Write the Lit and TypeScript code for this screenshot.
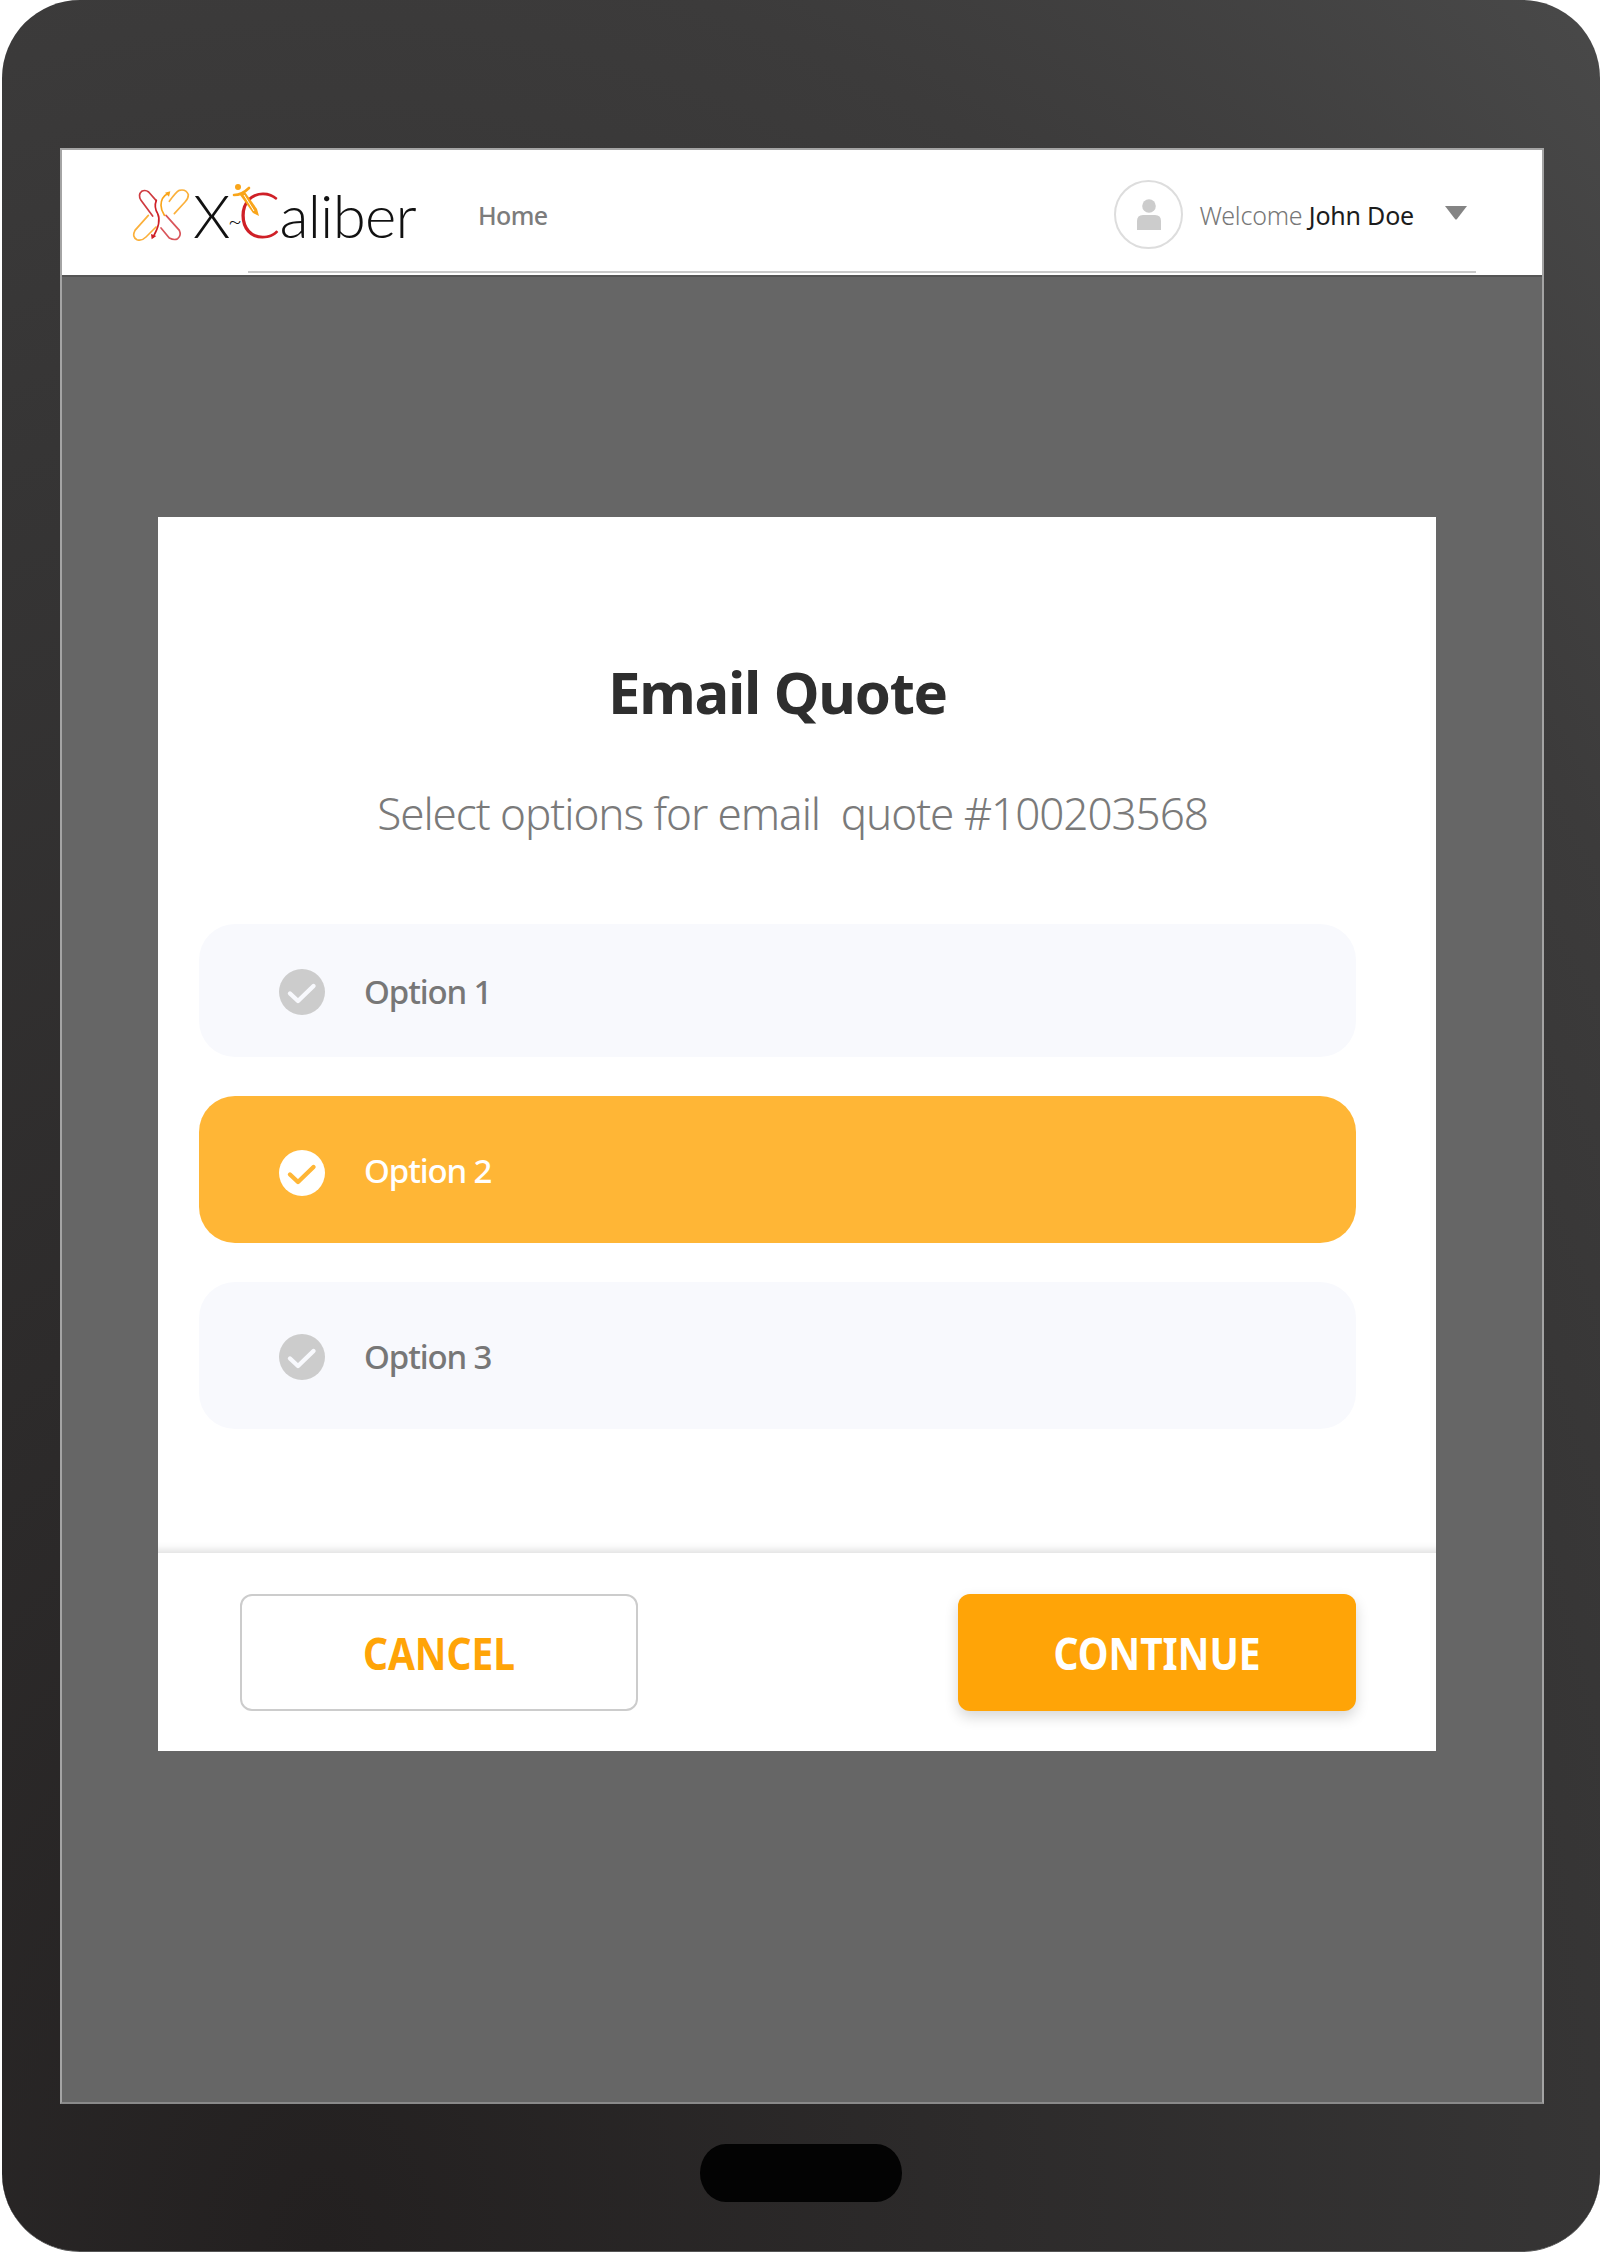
import { LitElement, html, css, svg } from 'lit';
import { customElement, state } from 'lit/decorators.js';

const options = ['Option 1', 'Option 2', 'Option 3'];

const checkIcon = svg`<path d="M11 24.5l8 7.5L34.5 17" fill="none" stroke-width="4.4" stroke-linecap="round" stroke-linejoin="round"/>`;

@customElement('app-root')
export class AppRoot extends LitElement {
    @state() selected = 1;

    static styles = css`
    :host {
      display: block;
      width: 1600px;
      height: 2254px;
      background: #fff;
      font-family: "Noto Sans", "Liberation Sans", sans-serif;
    }

    * { box-sizing: border-box; }

    .device {
      height: 2252px;
      margin-left: 2px;
      padding: 148px 56px 147px 58px;
      border-radius: 78px;
      background: radial-gradient(ellipse 1800px 2600px at 20% 100%, #232020 0, #363535 71%, #3c3b3b 89%, #494949 112%);
      border-bottom: 1px solid #555;
    }

    .screen {
      height: 100%;
      display: flex;
      flex-direction: column;
      background: #666;
      border: 2px solid #a4a4a4;
      border-bottom-color: #8a8a8a;
    }

    /* top bar */
    .topbar {
      flex: none;
      height: 127px;
      background: #fff;
      border-bottom: 2px solid #555;
      display: flex;
      flex-direction: column;
    }

    .bar-row {
      flex: 1;
      display: flex;
      align-items: center;
      padding: 8px 74px 0 69px;
    }

    .rule {
      flex: none;
      height: 2px;
      margin: 0 66px 2px 186px;
      background: #c9c9c9;
    }

    .logo {
      position: relative;
      width: 287px;
      height: 60px;
      display: flex;
      align-items: center;
    }

    .logo-mark {
      flex: none;
      width: 60px;
      height: 55px;
      margin-right: 2px;
    }

    .wordmark {
      font-family: "Lato", sans-serif;
      font-weight: 300;
      font-size: 60px;
      line-height: 60px;
      letter-spacing: -0.8px;
      color: #111;
      white-space: pre;
      margin-top: 6px;
    }

    .wordmark .ex { letter-spacing: -2.5px; }
    .wordmark .tilde { font-size: 24px; letter-spacing: -4px; vertical-align: 8px; }
    .wordmark .cap { color: #cf2027; font-size: 63px; letter-spacing: -1px; }

    .sword {
      position: absolute;
      left: 101px;
      top: -3px;
      width: 32px;
      height: 38px;
    }

    .home {
      margin-left: 60px;
      font-size: 25px;
      font-weight: 500;
      letter-spacing: -0.6px;
      color: #7c7c7c;
    }

    .user {
      margin-left: auto;
      display: flex;
      align-items: center;
    }

    .avatar {
      width: 69px;
      height: 69px;
      border: 2px solid #ddd;
      border-radius: 50%;
      display: flex;
      align-items: center;
      justify-content: center;
    }

    .welcome {
      margin-left: 16px;
      font-size: 25px;
      font-weight: 300;
      letter-spacing: -0.2px;
      color: #777;
      white-space: pre;
    }

    .welcome b { font-weight: 400; color: #1c1c1c; }

    .caret { margin-left: 30px; margin-top: -4px; }

    /* modal */
    .stage {
      flex: 1;
      padding: 240px 106px 0 96px;
    }

    .modal {
      height: 1234px;
      background: #fff;
      display: flex;
      flex-direction: column;
    }

    .modal-body {
      flex: 1;
      padding: 0 80px 0 41px;
      display: flex;
      flex-direction: column;
      box-shadow: inset 0 -12px 10px -10px #d8d8d8;
    }

    h1 {
      margin: 135px 0 0;
      height: 80px;
      font-size: 58px;
      line-height: 80px;
      font-weight: 700;
      letter-spacing: -1.3px;
      text-align: center;
      color: #2e2e2e;
    }

    .subtitle {
      margin: 51px 0 0 30px;
      height: 60px;
      font-size: 44px;
      line-height: 60px;
      font-weight: 300;
      letter-spacing: -1.05px;
      text-align: center;
      color: #7a7a7a;
      white-space: pre;
    }

    .options {
      margin-top: 81px;
      display: flex;
      flex-direction: column;
      gap: 39px;
    }

    .option {
      height: 147px;
      padding-left: 80px;
      display: flex;
      align-items: center;
      gap: 39px;
      border-radius: 36px;
      background: #f8f9fd;
      font-size: 33px;
      font-weight: 500;
      letter-spacing: -1.1px;
      color: #777;
    }

    .option:first-child { height: 133px; }

    .option svg { flex: none; width: 46px; height: 46px; margin-top: 2px; }
    .option span { margin-top: 2px; }
    .option circle { fill: #ccc; }
    .option path { stroke: #f8f9fd; }

    .option.on { background: #ffb636; color: #fff; }
    .option.on svg { margin-top: 7px; }
    .option.on circle { fill: #fff; }
    .option.on path { stroke: #ffb636; }

    .modal-foot {
      flex: none;
      height: 198px;
      padding: 41px 80px 0 82px;
      display: flex;
      justify-content: space-between;
      align-items: flex-start;
    }

    .btn {
      width: 398px;
      height: 117px;
      border-radius: 12px;
      display: flex;
      align-items: center;
      justify-content: center;
      font-size: 44px;
      font-weight: 700;
    }

    /* the face in the reference is narrower than any installed one */
    .btn span { display: inline-block; transform: scaleX(0.885); }

    .btn.ghost { border: 2px solid #ccc; color: #ffa407; }
    .btn.solid {
      background: #ffa407;
      color: #fff;
      box-shadow: 0 6px 14px rgba(0, 0, 0, 0.16);
    }

    .home-key {
      position: absolute;
      left: 700px;
      top: 2144px;
      width: 202px;
      height: 58px;
      border-radius: 26px / 29px;
      background: #030303;
    }
    `;

    private renderLogoMark() {
        return html`<svg class="logo-mark" viewBox="60 85 180 165" fill="none" stroke-width="5" stroke-linecap="round">
            <path stroke="#cf3a3f" d="M135 125 113 100Q103 92 92 98 80 108 90 125L125 172"/>
            <path stroke="#d9555a" d="M165 170 205 215Q212 230 200 240 190 246 175 238L150 208"/>
            <path stroke="#fbb03b" d="M175 128Q195 100 205 95 225 90 232 108 232 120 222 130L190 165"/>
            <path stroke="#fbb03b" d="M112 170 72 215Q62 235 78 243 92 248 105 235L135 205"/>
            <path stroke="#f9a51a" d="M172 104Q150 115 150 140 150 155 160 170"/>
            <path stroke="#cf2027" d="M136 125Q128 145 140 165 152 190 127 234"/>
            <path fill="#f9a51a" d="M162 102 178 98 174 114Z"/>
            <path fill="#cf2027" d="M120 226 136 232 122 242Z"/>
        </svg>`;
    }

    private renderSword() {
        return html`<svg class="sword" viewBox="0 0 32 38" fill="none">
            <circle cx="6" cy="5" r="3" fill="#f9a51a"/>
            <path d="M2 13Q10 13 17 6" stroke="#f9a51a" stroke-width="2.6" stroke-linecap="round"/>
            <path d="M8 13 13 10 25 27 27 34 21 31Z" fill="#f9a51a"/>
            <path d="M12 13 22 29" stroke="#fff" stroke-width="1"/>
        </svg>`;
    }

    render() {
        return html`
        <div class="device">
          <div class="screen">
            <div class="topbar">
              <div class="bar-row">
                <div class="logo">
                  ${this.renderLogoMark()}
                  <div class="wordmark"><span class="ex">X</span><span class="tilde">~</span><span class="cap">C</span>aliber</div>
                  ${this.renderSword()}
                </div>
                <div class="home">Home</div>
                <div class="user">
                  <div class="avatar">
                    <svg width="26" height="32" viewBox="0 0 26 32" fill="#ccc">
                      <circle cx="13" cy="7" r="6.8"/>
                      <path d="M1 31V22Q1 16 7 16H19Q25 16 25 22V31Z"/>
                    </svg>
                  </div>
                  <div class="welcome">Welcome <b>John Doe</b></div>
                  <svg class="caret" width="24" height="14" viewBox="0 0 24 14" fill="#848484">
                    <path d="M1 0H23L12.8 13.2Q12 14 11.2 13.2Z"/>
                  </svg>
                </div>
              </div>
              <div class="rule"></div>
            </div>
            <div class="stage">
              <div class="modal">
                <div class="modal-body">
                  <h1>Email Quote</h1>
                  <div class="subtitle">Select options for email  quote #100203568</div>
                  <div class="options">
                    ${options.map((label, i) => html`
                      <div class="option ${i === this.selected ? 'on' : ''}" @click=${() => (this.selected = i)}>
                        <svg viewBox="0 0 46 46"><circle cx="23" cy="23" r="23"/>${checkIcon}</svg>
                        <span>${label}</span>
                      </div>
                    `)}
                  </div>
                </div>
                <div class="modal-foot">
                  <div class="btn ghost"><span>CANCEL</span></div>
                  <div class="btn solid"><span>CONTINUE</span></div>
                </div>
              </div>
            </div>
          </div>
        </div>
        <div class="home-key"></div>
        `;
    }
}
